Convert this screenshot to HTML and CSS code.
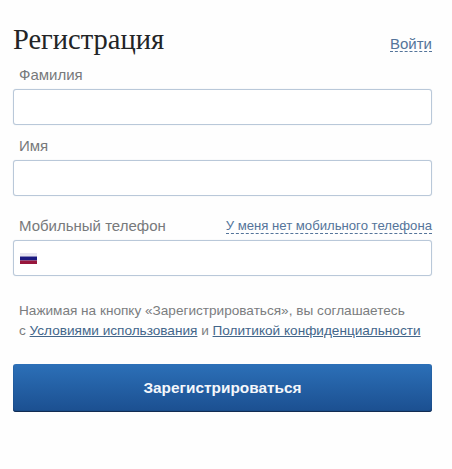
FILE: index.html
```html
<html>
   <head>
      <meta charset="utf-8">
      <link rel="stylesheet" href="styles.css">
   </head>
   <body>
      <div class="form">
         <div class="header">
            <h1>Регистрация</h1>
            <a class="dashLink loginLink">Войти</a>
         </div>
         <div class="field nameField">
            <div class="labelRow"><label>Фамилия</label></div>
            <div class="inputBox"></div>
         </div>
         <div class="field nameField">
            <div class="labelRow"><label>Имя</label></div>
            <div class="inputBox"></div>
         </div>
         <div class="field phoneField">
            <div class="labelRow">
               <label>Мобильный телефон</label>
               <a class="dashLink">У меня нет мобильного телефона</a>
            </div>
            <div class="inputBox">
               <svg class="flag" width="17" height="11" viewBox="0 0 17 11">
                  <rect width="17" height="3.5" fill="#e6e4f0"/>
                  <rect y="3.5" width="17" height="4" fill="#1a1880"/>
                  <rect y="7.5" width="17" height="3.5" fill="#98163c"/>
               </svg>
            </div>
         </div>
         <p class="terms">Нажимая на кнопку «Зарегистрироваться», вы соглашаетесь<br>с <a>Условиями использования</a> и <a>Политикой конфиденциальности</a></p>
         <button class="submitButton" type="button">Зарегистрироваться</button>
      </div>
   </body>
</html>
```
FILE: styles.css
```css
body {
margin: 0;
background-color: #fefefe;
font-family: "Liberation Sans", Arial, sans-serif;
}
.form {
width: 419px;
padding-top: 24px;
margin-left: 13px;
}
.header {
display: flex;
justify-content: space-between;
align-items: flex-end;
height: 31px;
}
h1 {
margin: 0;
font-family: "Liberation Serif", serif;
font-size: 28.5px;
font-weight: normal;
line-height: 31px;
color: #222426;
}
.dashLink {
color: #54749a;
border-bottom: 1px dashed #54749a;
line-height: 14px;
}
.loginLink {
font-size: 15px;
margin-bottom: 3px;
}
.field .dashLink {
font-size: 13.15px;
}
.labelRow {
display: flex;
justify-content: space-between;
align-items: flex-end;
padding-left: 6px;
height: 18px;
margin-bottom: 6px;
}
label {
font-size: 15px;
color: #77797b;
}
.nameField {
margin-top: 10px;
}
.nameField + .nameField {
margin-top: 11px;
}
.phoneField {
margin-top: 20px;
}
.inputBox {
display: flex;
align-items: center;
height: 34px;
border: 1px solid #b9c8d9;
border-radius: 3px;
background-color: #fff;
box-shadow: 0 0 1px #c6d2df;
}
.flag {
margin-left: 6px;
}
.terms {
margin: 25px 0 0;
padding-left: 6px;
font-size: 13.6px;
line-height: 20px;
color: #7b7d7f;
}
.terms a {
color: #43668a;
text-decoration: underline;
}
.submitButton {
display: block;
width: 100%;
height: 48px;
margin-top: 23px;
border: none;
border-radius: 3px;
background: linear-gradient(#2c70b8, #1b4f90);
box-shadow: inset 0 -1px 1px #12294c;
color: #f4f7fb;
font-family: "Liberation Sans", Arial, sans-serif;
font-size: 15.4px;
font-weight: bold;
}
```
